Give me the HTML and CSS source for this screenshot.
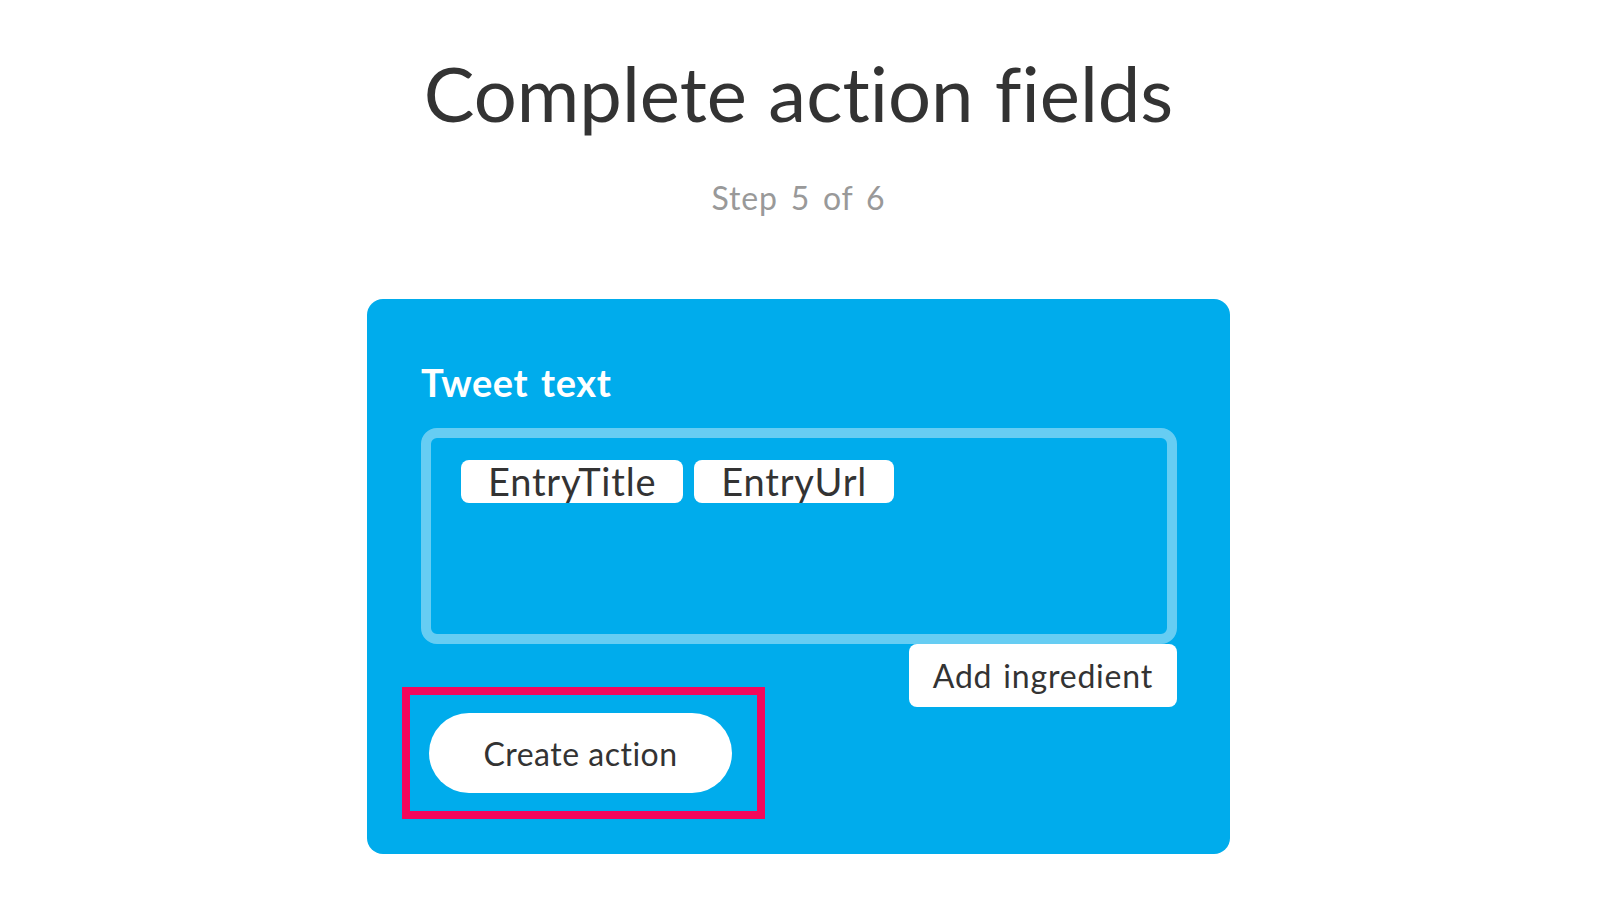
FILE: index.html
```html
<!DOCTYPE html>
<html lang="en">
<head>
<meta charset="utf-8">
<title>Complete action fields</title>
<link rel="stylesheet" href="styles.css">
</head>
<body>
<main class="page">
  <h1 class="title">Complete action fields</h1>
  <p class="step">Step 5 of 6</p>
  <section class="card">
    <label class="field-label">Tweet text</label>
    <div class="field-input">
      <span class="pill">EntryTitle</span>
      <span class="pill">EntryUrl</span>
    </div>
    <div class="ingredient-row">
      <button class="ingredient-btn" type="button">Add ingredient</button>
    </div>
    <div class="submit-wrap">
      <button class="submit-btn" type="button">Create action</button>
      <span class="highlight"></span>
    </div>
  </section>
</main>
</body>
</html>
```
FILE: styles.css
```css
* { box-sizing: border-box; }
body {
  margin: 0;
  background: #ffffff;
  font-family: Lato, "Noto Sans", sans-serif;
  font-variant-ligatures: none;
  color: #333333;
}
.page {
  display: flex;
  flex-direction: column;
  align-items: center;
}
.title {
  margin: 54px 0 0;
  font-size: 76px;
  line-height: 78px;
  font-weight: 400;
  word-spacing: 2px;
  color: #333333;
}
.step {
  margin: 51px 0 0;
  font-size: 32px;
  line-height: 30px;
  letter-spacing: 0.8px;
  word-spacing: 4px;
  color: #999999;
}
.card {
  margin-top: 86px;
  width: 863px;
  padding: 64px 53px 61px 54px;
  background: #00acec;
  border-radius: 16px;
  display: flex;
  flex-direction: column;
}
.field-label {
  font-size: 38px;
  line-height: 38px;
  font-weight: 700;
  letter-spacing: 0.6px;
  word-spacing: 3px;
  color: #ffffff;
}
.field-input {
  margin-top: 27px;
  height: 216px;
  border: 10px solid rgba(255, 255, 255, 0.4);
  border-radius: 16px;
  padding: 22px 30px;
  display: flex;
  align-items: flex-start;
  gap: 11px;
}
.pill {
  height: 43px;
  line-height: 43px;
  padding: 0 27px;
  background: #ffffff;
  border-radius: 8px;
  font-size: 38px;
  letter-spacing: 0.8px;
  color: #333333;
}
.ingredient-row {
  display: flex;
  justify-content: flex-end;
}
.ingredient-btn {
  height: 63px;
  padding: 0 24px;
  border: none;
  border-radius: 8px;
  background: #ffffff;
  font-family: inherit;
  font-size: 32px;
  letter-spacing: 0.8px;
  word-spacing: 2px;
  color: #333333;
}
.submit-wrap {
  position: relative;
  align-self: flex-start;
  margin: 6px 0 0 8px;
}
.submit-btn {
  display: block;
  width: 303px;
  height: 80px;
  border: none;
  border-radius: 40px;
  background: #ffffff;
  font-family: inherit;
  font-size: 32px;
  letter-spacing: 0.5px;
  color: #333333;
}
.highlight {
  position: absolute;
  left: -27px;
  top: -26px;
  right: -33px;
  bottom: -26px;
  border: 8px solid #f5075b;
  pointer-events: none;
}
```
